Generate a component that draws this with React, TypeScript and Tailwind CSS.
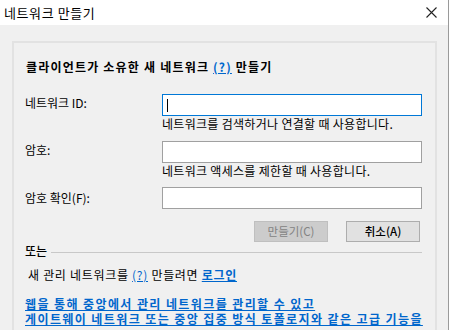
import React from "react";

const font = { fontFamily: '"Noto Sans CJK KR", "Noto Sans", sans-serif' };

export default function App() {
  return (
    <div style={font} className="w-[450px] h-[330px] overflow-hidden bg-white text-[12px] text-black">
      <div className="w-[449px] h-[330px] border-r border-[#9a9a9a] flex flex-col">
        <div className="h-[25px] bg-white flex items-center justify-between pl-[4px] pr-[11px] shrink-0">
          <span className="text-[13px] leading-none tracking-[0.6px]">네트워크 만들기</span>
          <svg width="11" height="11" viewBox="0 0 11 11">
            <path d="M0.5 0.5 L10.5 10.5 M10.5 0.5 L0.5 10.5" stroke="#222" strokeWidth="1.1" />
          </svg>
        </div>
        <div className="flex-1 bg-[#f0f0f0] pl-[12px] pr-[11px] pt-[16px]">
          <div className="border-2 border-b-0 border-[#e2e2e2] h-full pl-[11px] pr-[12px] pt-[16px]">
            <div className="font-bold leading-[16px] ml-[1px] tracking-[1.2px] whitespace-nowrap">
              클라이언트가 소유한 새 네트워크{" "}
              <span className="text-[#0066cc] underline">(?)</span> 만들기
            </div>

            <div className="mt-[19px] flex items-center">
              <span className="w-[137px] -mt-[4px]">네트워크 ID:</span>
              <div className="w-[260px] h-[22px] bg-white border border-[#0078d7] flex items-center pl-[4px]">
                <div className="w-px h-[13px] bg-black" />
              </div>
            </div>
            <div className="ml-[137px] leading-[16px] tracking-[0.3px] whitespace-nowrap">네트워크를 검색하거나 연결할 때 사용합니다.</div>

            <div className="mt-[9px] flex items-center">
              <span className="w-[137px] -mt-[4px]">암호:</span>
              <div className="w-[260px] h-[22px] bg-white border border-[#a0a0a0]" />
            </div>
            <div className="ml-[137px] leading-[16px] tracking-[0.3px] whitespace-nowrap">네트워크 액세스를 제한할 때 사용합니다.</div>

            <div className="mt-[8px] flex items-center">
              <span className="w-[137px]">암호 확인(F):</span>
              <div className="w-[260px] h-[22px] bg-white border border-[#a0a0a0]" />
            </div>

            <div className="mt-[12px] flex justify-end gap-[18px] pr-[3px]">
              <div className="w-[74px] h-[21px] bg-[#cccccc] border border-[#bfbfbf] text-[#838383] flex items-center justify-center text-[11.5px]">
                만들기(C)
              </div>
              <div className="w-[74px] h-[21px] bg-[#e1e1e1] border border-[#adadad] flex items-center justify-center text-[11.5px] font-medium">
                취소(A)
              </div>
            </div>

            <div className="mt-[1px] flex items-center h-[16px]">
              <span className="font-medium">또는</span>
              <div className="flex-1 h-px bg-[#c8c8c8] ml-[4px] mr-[1px] mt-[2px]" />
            </div>

            <div className="mt-[8px] ml-[3px] leading-[16px] tracking-[0.7px] whitespace-nowrap">
              새 관리 네트워크를 <span className="text-[#0066cc] underline">(?)</span> 만들려면{" "}
              <span className="text-[#0066cc] underline font-bold">로그인</span>
            </div>

            <div className="mt-[13px] leading-[15px] text-[#0066cc] underline font-bold whitespace-nowrap tracking-[1.4px]">
              <div>웹을 통해 중앙에서 관리 네트워크를 관리할 수 있고</div>
              <div>게이트웨이 네트워크 또는 중앙 집중 방식 토폴로지와 같은 고급 기능을</div>
            </div>
          </div>
        </div>
      </div>
    </div>
  );
}
